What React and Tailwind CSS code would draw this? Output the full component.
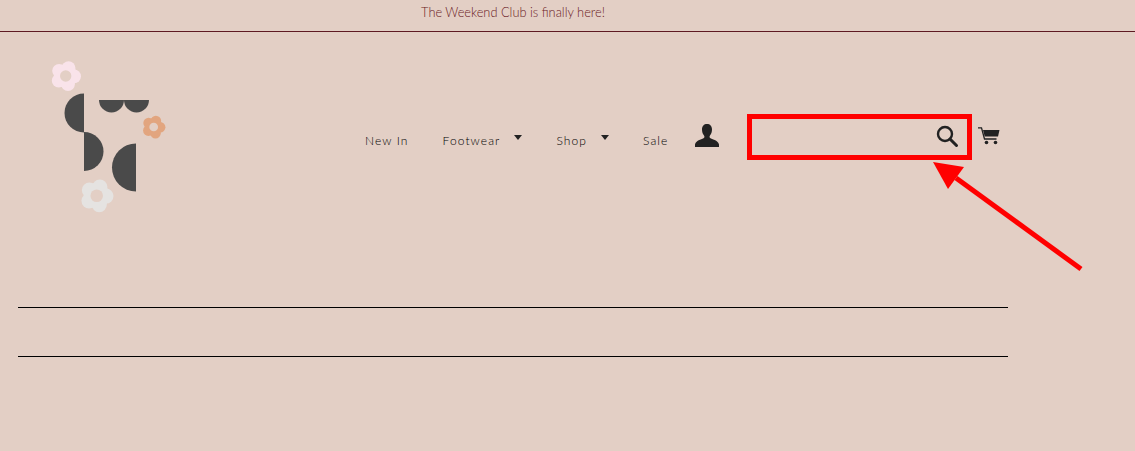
const Caret = () => (
  <svg width="8" height="5" viewBox="0 0 8 5" className="ml-[14px] mb-[7px]">
    <path d="M0 0h8L4 5z" fill="#222" />
  </svg>
);

const Flower = ({ cx, cy, r, fill, hole }) => {
  const petals = [0, 72, 144, 216, 288];
  return (
    <g>
      {petals.map((a) => (
        <circle
          key={a}
          cx={cx + r * 0.56 * Math.cos(((a - 70) * Math.PI) / 180)}
          cy={cy + r * 0.56 * Math.sin(((a - 70) * Math.PI) / 180)}
          r={r * 0.46}
          fill={fill}
        />
      ))}
      <circle cx={cx} cy={cy} r={r * 0.78} fill={fill} />
      <circle cx={cx} cy={cy} r={r * 0.38} fill={hole} />
    </g>
  );
};

const Logo = () => (
  <svg width="130" height="165" viewBox="40 55 130 165" className="shrink-0">
    <path d="M84 93.500a19.500 19.500 0 0 0 0 39z" fill="#4a4a4a" />
    <path d="M84 132a19.500 19.500 0 0 1 0 39z" fill="#4a4a4a" />
    <path d="M136 143.500a24 24 0 0 0 0 48z" fill="#4a4a4a" />
    <path d="M99 100a12.500 12.500 0 0 0 25 0z" fill="#4a4a4a" />
    <path d="M124 100a12.500 12.500 0 0 0 25 0z" fill="#4a4a4a" />
    <Flower cx={65.7} cy={76} r={15} fill="#f9e3ea" hole="#e3cfc5" />
    <Flower cx={153.7} cy={127} r={11.5} fill="#e2a57f" hole="#e3cfc5" />
    <Flower cx={96.7} cy={195.7} r={16.5} fill="#e5e3e1" hole="#e3cfc5" />
  </svg>
);

const PersonIcon = () => (
  <svg width="24" height="24" viewBox="0 0 24 24" className="shrink-0">
    <path
      d="M12 0c3 0 5 2 5 5.500 0 2.500-.8 4.500-2 6-.7.9-.6 2.200.5 2.800 2.500 1.200 7.500 2.200 8.500 6.200V23H0v-2.500c1-4 6-5 8.500-6.200 1.100-.6 1.200-1.900.5-2.800-1.200-1.500-2-3.500-2-6C7 2 9 0 12 0z"
      fill="#222"
    />
  </svg>
);

const SearchIcon = () => (
  <svg width="24" height="24" viewBox="0 0 24 24" className="shrink-0">
    <circle cx="9" cy="9" r="7" fill="none" stroke="#222" strokeWidth="2.400" />
    <path d="M14 14l6.500 6.500" stroke="#222" strokeWidth="3" strokeLinecap="round" />
  </svg>
);

const CartIcon = () => (
  <svg width="22" height="18" viewBox="0 0 22 18" className="shrink-0">
    <path d="M0 .8h3.500l3 11.200h12" fill="none" stroke="#222" strokeWidth="1.300" />
    <path d="M5 3h16.500l-1.500 6.500H6.700z" fill="#222" />
    <circle cx="8.500" cy="15.500" r="1.800" fill="#222" />
    <circle cx="17.500" cy="15.500" r="1.800" fill="#222" />
  </svg>
);

export default function App() {
  return (
    <div className="relative h-[451px] overflow-hidden bg-[#e3cfc5] font-['Lato',sans-serif]">
      <div className="h-[32px] border-b border-[#5e1a22] pr-[109px] text-center text-[12.8px] font-light leading-[24px] text-[#6b1a24]">
        The Weekend Club is finally here!
      </div>

      <header className="flex h-[275px] items-start pl-[40px] pt-[23px]">
        <Logo />
        <nav className="ml-[195px] mt-[77px] flex items-center gap-[34px] text-[12px] font-light tracking-[1.100px] text-black">
          <a>New In</a>
          <a className="flex items-center">Footwear<Caret /></a>
          <a className="flex items-center">Shop<Caret /></a>
          <a>Sale</a>
        </nav>
        <div className="ml-[27px] mt-[69px]"><PersonIcon /></div>
        <div className="ml-[29px] mt-[60px] flex h-[44px] w-[224px] items-center justify-end pr-[12px]">
          <SearchIcon />
        </div>
        <div className="ml-[6px] mt-[72px]"><CartIcon /></div>
      </header>

      <div className="ml-[18px] h-[50px] w-[990px] border-y border-black" />

      <div className="absolute left-[747px] top-[114px] h-[46px] w-[225px] border-[5px] border-[#ff0000]" />
      <svg className="absolute left-[925px] top-[155px]" width="165" height="120" viewBox="925 155 165 120">
        <path d="M933 162l31 5-16 22z" fill="#ff0000" />
        <path d="M956 178l125 91" stroke="#ff0000" strokeWidth="5" />
      </svg>
    </div>
  );
}
